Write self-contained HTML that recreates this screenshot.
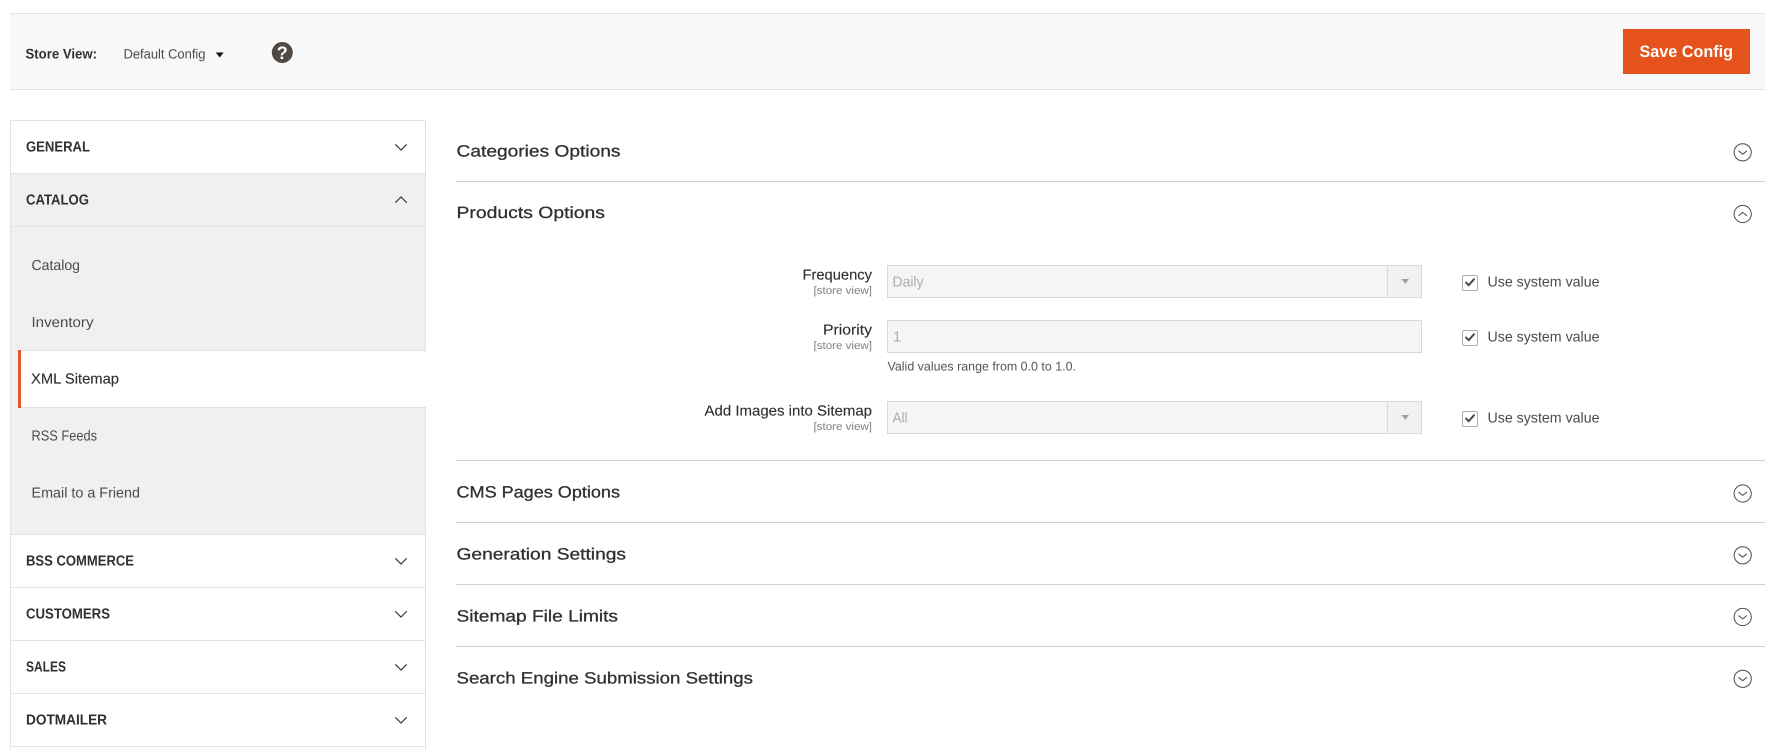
<!DOCTYPE html>
<html lang="en"><head><meta charset="utf-8"><title>Configuration</title>
<style>
html,body{margin:0;padding:0;background:#fff;width:1778px;height:750px;overflow:hidden}
svg{display:block}
text{font-family:"Liberation Sans",Arial,sans-serif}
.b{font-weight:700;font-size:14.5px;fill:#303030}
.n{font-size:14.5px;fill:#4f4a46}
.h{font-size:16.3px;fill:#303030;stroke:#303030;stroke-width:.3}
.l{font-size:14.5px;fill:#303030;stroke:#303030;stroke-width:.15}
.s{font-size:11px;fill:#808080}
.d{font-size:14.5px;fill:#adadad}
.chev{fill:none;stroke:#41362f;stroke-width:1.2}
.c{fill:none;stroke:#514943;stroke-width:1}
</style></head><body>
<svg width="1778" height="750" viewBox="0 0 1778 750" xmlns="http://www.w3.org/2000/svg" text-rendering="geometricPrecision">
<rect width="1778" height="750" fill="#fff"/>
<!-- top bar -->
<rect x="10" y="13" width="1755" height="77" fill="#f8f8f8"/>
<rect x="10" y="13" width="1755" height="1" fill="#e3e3e3"/>
<rect x="10" y="89" width="1755" height="1" fill="#e3e3e3"/>
<text class="b" x="25.5" y="58.5" textLength="71.5" lengthAdjust="spacingAndGlyphs" style="font-size:14px">Store View:</text>
<text class="n" x="123.5" y="58.5" textLength="82" lengthAdjust="spacingAndGlyphs" style="font-size:13.5px">Default Config</text>
<path d="M215.8 52.5h7.8l-3.9 5z" fill="#111"/>
<circle cx="282.3" cy="52.5" r="10.5" fill="#514943"/>
<text x="282.3" y="59" text-anchor="middle" style="font-size:18px;font-weight:700;fill:#fff">?</text>
<rect x="1623" y="29" width="127" height="45" fill="#e5521c"/>
<text x="1639.5" y="56.8" textLength="93.5" lengthAdjust="spacingAndGlyphs" style="font-size:16.5px;font-weight:700;fill:#fff">Save Config</text>

<!-- sidebar -->
<rect x="10" y="120" width="416" height="630" fill="#fff"/>
<rect x="10" y="173" width="416" height="362" fill="#f0f0f0"/>
<rect x="18" y="350" width="408" height="57" fill="#fff"/>
<rect x="18" y="350" width="3" height="58" fill="#e0582a"/>
<g fill="#e3e3e3">
<rect x="10" y="120" width="1" height="630"/>
<rect x="425" y="120" width="1" height="230"/>
<rect x="425" y="407" width="1" height="343"/>
<rect x="10" y="120" width="416" height="1"/>
<rect x="10" y="173" width="416" height="1"/>
<rect x="10" y="226" width="416" height="1"/>
<rect x="21" y="350" width="405" height="1"/>
<rect x="21" y="407" width="405" height="1"/>
<rect x="10" y="534" width="416" height="1"/>
<rect x="10" y="587" width="416" height="1"/>
<rect x="10" y="640" width="416" height="1"/>
<rect x="10" y="693" width="416" height="1"/>
<rect x="10" y="746" width="416" height="1"/>
</g>
<text class="b" x="26" y="151.3" textLength="64" lengthAdjust="spacingAndGlyphs">GENERAL</text>
<text class="b" x="26" y="204.3" textLength="63" lengthAdjust="spacingAndGlyphs">CATALOG</text>
<text class="n" x="31.5" y="269.8" textLength="48.5" lengthAdjust="spacingAndGlyphs">Catalog</text>
<text class="n" x="31.5" y="326.8" textLength="62" lengthAdjust="spacingAndGlyphs">Inventory</text>
<text class="l" x="31" y="383.3" textLength="88" lengthAdjust="spacingAndGlyphs">XML Sitemap</text>
<text class="n" x="31.5" y="440.5" textLength="65.5" lengthAdjust="spacingAndGlyphs">RSS Feeds</text>
<text class="n" x="31.5" y="497.3" textLength="108.5" lengthAdjust="spacingAndGlyphs">Email to a Friend</text>
<text class="b" x="26" y="565.3" textLength="108" lengthAdjust="spacingAndGlyphs">BSS COMMERCE</text>
<text class="b" x="26" y="618.3" textLength="84" lengthAdjust="spacingAndGlyphs">CUSTOMERS</text>
<text class="b" x="26" y="671.3" textLength="40" lengthAdjust="spacingAndGlyphs">SALES</text>
<text class="b" x="26" y="724.3" textLength="81" lengthAdjust="spacingAndGlyphs">DOTMAILER</text>
<path class="chev" d="M395.3 144.3l5.7 5.7 5.7-5.7"/>
<path class="chev" d="M395.3 202.7l5.7-5.7 5.7 5.7"/>
<path class="chev" d="M395.3 558.3l5.7 5.7 5.7-5.7"/>
<path class="chev" d="M395.3 611.3l5.7 5.7 5.7-5.7"/>
<path class="chev" d="M395.3 664.3l5.7 5.7 5.7-5.7"/>
<path class="chev" d="M395.3 717.3l5.7 5.7 5.7-5.7"/>

<!-- sections -->
<g fill="#cfcfcf">
<rect x="456" y="181" width="1309" height="1"/>
<rect x="456" y="460" width="1309" height="1"/>
<rect x="456" y="522" width="1309" height="1"/>
<rect x="456" y="584" width="1309" height="1"/>
<rect x="456" y="646" width="1309" height="1"/>
</g>
<text class="h" x="456.5" y="156.3" textLength="164" lengthAdjust="spacingAndGlyphs">Categories Options</text>
<text class="h" x="456.5" y="218" textLength="148.5" lengthAdjust="spacingAndGlyphs">Products Options</text>
<text class="h" x="456.5" y="497.7" textLength="163.5" lengthAdjust="spacingAndGlyphs">CMS Pages Options</text>
<text class="h" x="456.5" y="559.7" textLength="169.5" lengthAdjust="spacingAndGlyphs">Generation Settings</text>
<text class="h" x="456.5" y="621.7" textLength="161.5" lengthAdjust="spacingAndGlyphs">Sitemap File Limits</text>
<text class="h" x="456.5" y="683.7" textLength="296.5" lengthAdjust="spacingAndGlyphs">Search Engine Submission Settings</text>

<g class="icons">
<circle class="c" cx="1742.7" cy="152.3" r="8.6"/><path class="c" d="M1738.5 150.8l4.2 3.4 4.2-3.4"/>
<circle class="c" cx="1742.7" cy="214" r="8.6"/><path class="c" d="M1738.5 215.8l4.2-3.4 4.2 3.4"/>
<circle class="c" cx="1742.7" cy="493.5" r="8.6"/><path class="c" d="M1738.5 492l4.2 3.4 4.2-3.4"/>
<circle class="c" cx="1742.7" cy="555.3" r="8.6"/><path class="c" d="M1738.5 553.8l4.2 3.4 4.2-3.4"/>
<circle class="c" cx="1742.7" cy="617" r="8.6"/><path class="c" d="M1738.5 615.5l4.2 3.4 4.2-3.4"/>
<circle class="c" cx="1742.7" cy="678.8" r="8.6"/><path class="c" d="M1738.5 677.3l4.2 3.4 4.2-3.4"/>
</g>

<!-- form -->
<g fill="#f5f5f4" stroke="#d9d9d9">
<rect x="887.5" y="265.5" width="534" height="32"/>
<rect x="887.5" y="320.5" width="534" height="32"/>
<rect x="887.5" y="401.5" width="534" height="32"/>
</g>
<g fill="#f1f1f1" stroke="#d9d9d9">
<rect x="1387.5" y="265.5" width="34" height="32"/>
<rect x="1387.5" y="401.5" width="34" height="32"/>
</g>
<path d="M1401.5 279h7.5l-3.75 5z" fill="#a0a0a0"/>
<path d="M1401.5 415h7.5l-3.75 5z" fill="#a0a0a0"/>

<text class="l" x="802.5" y="279.7" textLength="69.5" lengthAdjust="spacingAndGlyphs">Frequency</text>
<text class="s" x="813.5" y="294" textLength="58.5" lengthAdjust="spacingAndGlyphs">[store view]</text>
<text class="l" x="823" y="334.7" textLength="49" lengthAdjust="spacingAndGlyphs">Priority</text>
<text class="s" x="813.5" y="349" textLength="58.5" lengthAdjust="spacingAndGlyphs">[store view]</text>
<text class="l" x="704.5" y="415.7" textLength="167.5" lengthAdjust="spacingAndGlyphs">Add Images into Sitemap</text>
<text class="s" x="813.5" y="430" textLength="58.5" lengthAdjust="spacingAndGlyphs">[store view]</text>
<text class="d" x="892.5" y="286.5" textLength="31" lengthAdjust="spacingAndGlyphs">Daily</text>
<text class="d" x="893" y="341.5">1</text>
<text class="d" x="892.5" y="422.5" textLength="15" lengthAdjust="spacingAndGlyphs">All</text>
<text x="887.5" y="370.5" textLength="188.5" lengthAdjust="spacingAndGlyphs" style="font-size:12.5px;fill:#555">Valid values range from 0.0 to 1.0.</text>

<g fill="#fff" stroke="#adadad">
<rect x="1462.5" y="275.5" width="15" height="15" rx="1.5"/>
<rect x="1462.5" y="330.5" width="15" height="15" rx="1.5"/>
<rect x="1462.5" y="411.5" width="15" height="15" rx="1.5"/>
</g>
<g fill="none" stroke="#514943" stroke-width="2">
<path d="M1465.5 282l3.2 3.2 5.8-6.5"/>
<path d="M1465.5 337l3.2 3.2 5.8-6.5"/>
<path d="M1465.5 418l3.2 3.2 5.8-6.5"/>
</g>
<text class="n" x="1487.5" y="286.5" textLength="112" lengthAdjust="spacingAndGlyphs">Use system value</text>
<text class="n" x="1487.5" y="341.5" textLength="112" lengthAdjust="spacingAndGlyphs">Use system value</text>
<text class="n" x="1487.5" y="422.5" textLength="112" lengthAdjust="spacingAndGlyphs">Use system value</text>
</svg>
</body></html>
